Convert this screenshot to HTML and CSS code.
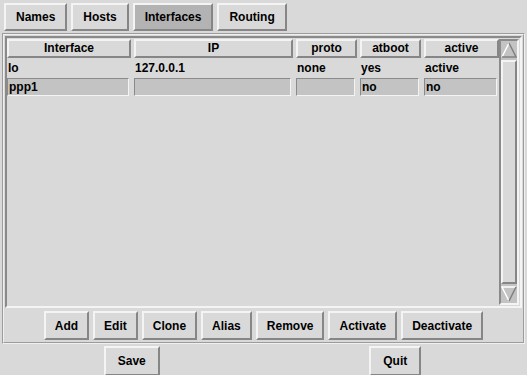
FILE: index.html
```html
<!DOCTYPE html>
<html lang="en">
<head>
    <meta charset="UTF-8">
    <title>Network Settings</title>
    <link rel="stylesheet" href="styles.css">
</head>
<body>
    <div class="tabs">
        <button class="btn tab">Names</button>
        <button class="btn tab">Hosts</button>
        <button class="btn tab selected">Interfaces</button>
        <button class="btn tab">Routing</button>
    </div>

    <div class="panel">
        <div class="listbox">
            <div class="table">
                <div class="head">Interface</div>
                <div class="head">IP</div>
                <div class="head">proto</div>
                <div class="head">atboot</div>
                <div class="head">active</div>

                <div class="cell">lo</div>
                <div class="cell">127.0.0.1</div>
                <div class="cell">none</div>
                <div class="cell">yes</div>
                <div class="cell">active</div>

                <div class="cell entry">ppp1</div>
                <div class="cell entry"></div>
                <div class="cell entry"></div>
                <div class="cell entry">no</div>
                <div class="cell entry">no</div>
            </div>
            <div class="scrollbar">
                <svg class="arrow" width="16" height="18" viewBox="0 0 16 18">
                    <polygon points="8,2 1,16 15,16" fill="#c3c3c3"/>
                    <polyline points="1,16 8,2" stroke="#ffffff" stroke-width="1.5" fill="none"/>
                    <polyline points="8,2 15,16 1,16" stroke="#828282" stroke-width="1.5" fill="none"/>
                </svg>
                <div class="slider"></div>
                <svg class="arrow" width="16" height="18" viewBox="0 0 16 18">
                    <polygon points="1,2 15,2 8,16" fill="#c3c3c3"/>
                    <polyline points="8,16 1,2 15,2" stroke="#ffffff" stroke-width="1.5" fill="none"/>
                    <polyline points="15,2 8,16" stroke="#828282" stroke-width="1.5" fill="none"/>
                </svg>
            </div>
        </div>
        <div class="actions">
            <button class="btn">Add</button>
            <button class="btn">Edit</button>
            <button class="btn">Clone</button>
            <button class="btn">Alias</button>
            <button class="btn">Remove</button>
            <button class="btn">Activate</button>
            <button class="btn">Deactivate</button>
        </div>
    </div>

    <div class="footer">
        <div class="half"><button class="btn">Save</button></div>
        <div class="half"><button class="btn">Quit</button></div>
    </div>
</body>
</html>
```

FILE: styles.css
```css
body {
    margin: 0;
    background: #d9d9d9;
    font-family: "Liberation Sans", Arial, sans-serif;
    font-weight: bold;
    font-size: 12px;
    color: #000;
}
.btn {
    font: inherit;
    color: #000;
    background: #d9d9d9;
    height: 29px;
    padding: 0 9px;
    border: 2px solid;
    border-color: #f4f4f4 #868686 #868686 #f4f4f4;
    cursor: pointer;
}
.tabs {
    display: flex;
    gap: 4px;
    padding: 3px 4px 2px;
}
.tab {
    height: 28px;
    padding: 0 10px;
}
.tab.selected {
    background: #b3b3b3;
}
.panel {
    margin: 0 2px;
    border: 2px groove #f0f0f0;
}
.listbox {
    margin: 1px;
    height: 266px;
    border: 2px solid;
    border-color: #8a8a8a #f4f4f4 #f4f4f4 #8a8a8a;
    padding: 1px 1px 1px 0;
    display: flex;
    justify-content: space-between;
}
.table {
    display: grid;
    grid-template-columns: 124px 159px 61px 61px 75px;
    grid-template-rows: 19px 18px 18px;
    column-gap: 3px;
    row-gap: 1px;
    align-content: start;
}
.head {
    text-align: center;
    line-height: 15px;
    border: 2px solid;
    border-color: #f4f4f4 #868686 #868686 #f4f4f4;
}
.cell {
    line-height: 18px;
    padding-left: 1px;
}
.entry {
    line-height: 16px;
    background: #c3c3c3;
    border: 1px solid;
    border-color: #8a8a8a #f4f4f4 #f4f4f4 #8a8a8a;
    margin-right: 2px;
    padding-left: 1px;
}
.scrollbar {
    width: 16px;
    display: flex;
    flex-direction: column;
    background: #c3c3c3;
    border: 2px solid;
    border-color: #8a8a8a #f4f4f4 #f4f4f4 #8a8a8a;
}
.arrow {
    display: block;
    flex-shrink: 0;
}
.slider {
    flex: 1;
    margin: 1px 0;
    background: #d9d9d9;
    border: 2px solid;
    border-color: #f4f4f4 #868686 #868686 #f4f4f4;
}
.actions {
    display: flex;
    justify-content: center;
    gap: 4px;
    padding: 2px 0;
}
.footer {
    display: flex;
    padding-top: 2px;
}
.half {
    flex: 1;
    display: flex;
    justify-content: center;
}
.footer .btn {
    height: 30px;
    padding: 0 12px;
}
```
